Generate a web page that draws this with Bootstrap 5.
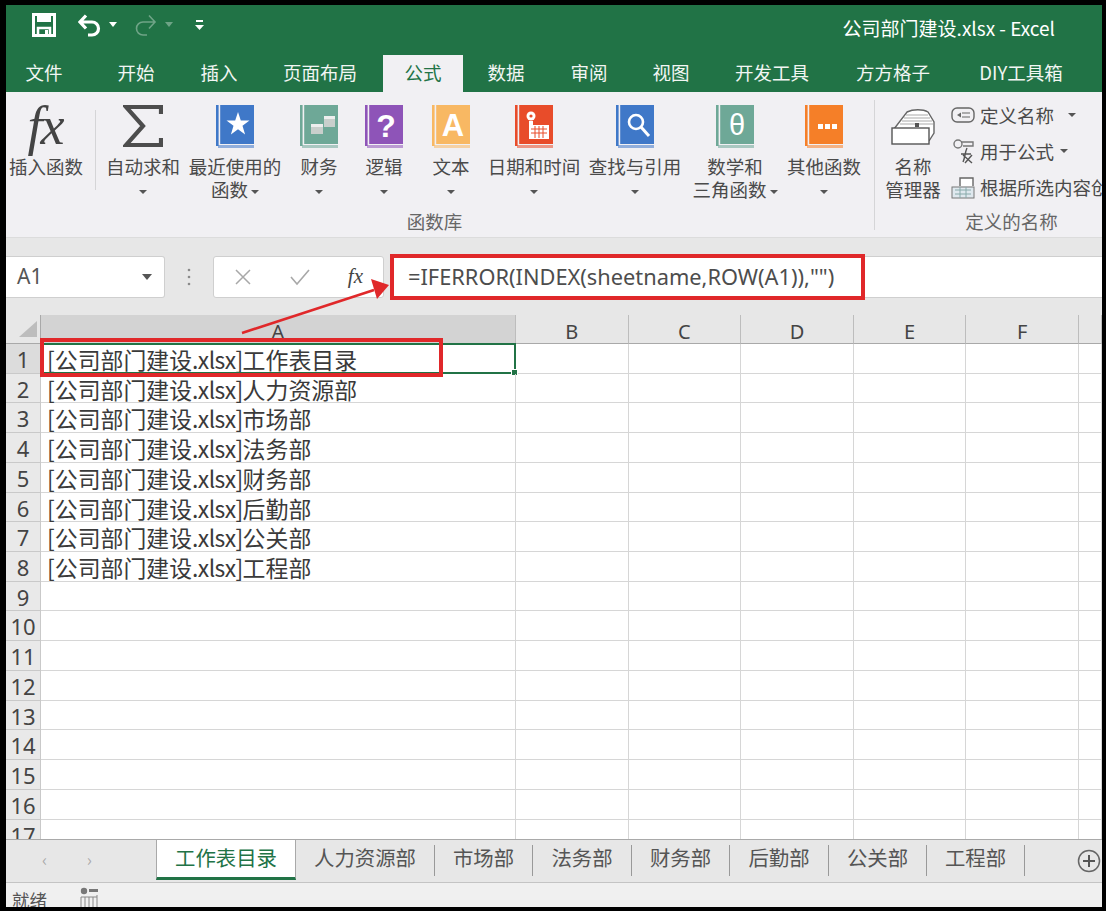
<!DOCTYPE html>
<html lang="zh-CN">
<head>
<meta charset="utf-8">
<title>公司部门建设.xlsx - Excel</title>
<link href="https://cdn.jsdelivr.net/npm/bootstrap@5.3.0/dist/css/bootstrap.min.css" rel="stylesheet">
<style>
html,body{margin:0;background:#fff;overflow:hidden}
body{font-family:"Noto Sans CJK SC","Noto Sans",sans-serif;color:#444}
.xl-frame{width:1106px;height:911px;border:solid #000;border-width:5px 4px 4px 6px;overflow:hidden;position:relative;display:flex;flex-direction:column;background:#fff}
.xl-title{height:50px;background:#217346;color:#fff;flex:none}
.qat{padding:0 0 11px 26px}
.qat-save{width:24px;height:24px;margin-right:22px}
.qat-undo{width:24px;height:24px;margin-right:7px}
.qat-redo{width:24px;height:24px;margin:0 8px 0 16px;opacity:.35}
.qat-caret{width:0;height:0;border:4px solid transparent;border-top:5px solid #fff;border-bottom:0}
.qat-caret.dim{opacity:.35;margin-right:22px}
.qat-more{width:9px;height:12px}
.xl-doc{font-size:19px;padding:0 47px 5px 0;line-height:45px}
.xl-tabs{height:37px;background:#217346;flex:none}
.xl-tabs .nav-link{height:37px;padding:0;line-height:34px;font-size:18.5px;color:#f2f6f3;text-align:center;white-space:nowrap}
.xl-tabs .nav-link.active{background:#f1f0f3;color:#217346}
.t1{width:76px;margin-right:9px}.t2{width:90px}.t3{width:76px}.t4{width:126px}.t5{width:80px}.t6{width:86px}.t7{width:80px}.t8{width:84px}.t9{width:118px}.t10{width:124px}.t11{width:132px}
.xl-ribbon{height:146px;background:#f1f0f3;border-bottom:1px solid #dcdcdc;flex:none;overflow:hidden}
.rb-group{width:858px;height:145px}
.rb-group2{width:227px;height:145px}
.rb-item{padding-top:13px;font-size:18.5px;line-height:23px;color:#4a4a4a;white-space:nowrap;text-align:center}
.rb-icon{height:43px;margin-bottom:7px;display:flex;align-items:center;justify-content:center}
.rb-icon svg{display:block}
.w1{width:80px}.w2{width:76px}.w3{width:108px}.w4{width:60px}.w5{width:70px}.w6{width:64px}.w7{width:102px}.w8{width:100px}.w9{width:78px}
.fx-big{font-family:"Liberation Serif",serif;font-style:italic;font-size:54px;line-height:43px;color:#444;letter-spacing:-2px;padding-right:2px}
.rb-caret{display:inline-block;width:0;height:0;border:4px solid transparent;border-top:4px solid #555;border-bottom:0;vertical-align:middle;margin-left:3px}
.rb-caret.solo{margin-left:0}
.rb-sep{width:1px;background:#d5d5d7;flex:none}
.sep1{height:80px;margin:18px 9px 0}
.sep2{height:130px;margin:8px 0 0 11px}
.rb-label{font-size:18.5px;line-height:23px;color:#666;text-align:center;margin-top:auto;padding-bottom:4px}
.rb-group2 .rb-label{padding-left:46px}
.rb-names{padding-top:5px;font-size:18.5px;line-height:36px;color:#4a4a4a;white-space:nowrap;overflow:hidden;width:151px}
.rb-names svg{flex:none;margin-right:5px}
.rb-names .rb-caret{margin-left:14px}
.rb-names .rb-caret.near{margin-left:6px}
.name-mgr{width:76px}
.xl-fbar{height:77px;background:#e7e7e7;flex:none;padding-top:18px}
.name-box{width:159px;height:42px;background:#fff;border:1px solid #cfcfcf;border-left:0;border-radius:0 3px 3px 0;padding:0 12px 0 11px;font-family:"Noto Sans",sans-serif;font-size:21px;color:#555}
.name-box i{width:0;height:0;border:5px solid transparent;border-top:6px solid #555;border-bottom:0}
.fb-dots{width:48px;height:42px}
.fb-btns{width:171px;height:42px;background:#fff;border:1px solid #cfcfcf;border-radius:3px;padding:0 20px 0 20px}
.fx-small{font-family:"Liberation Serif",serif;font-style:italic;font-size:21px;color:#444}
.fb-input{margin-left:6px;flex:1;height:42px;background:#fff;border-top:1px solid #cfcfcf;border-bottom:1px solid #cfcfcf;padding-left:18px;font-family:"Noto Sans",sans-serif;font-size:21.8px;line-height:40px;color:#4d4d4d;white-space:nowrap}
.xl-grid{height:524px;overflow:hidden;flex:none;background:#fff}
.xl-line{display:grid;grid-template-columns:35px 475px repeat(5,112.6px) 1fr;grid-template-rows:minmax(0,1fr);height:29.73px}
.xl-line>div{border-right:1px solid #d6d6d6;border-bottom:1px solid #d6d6d6;min-width:0;min-height:0}
.xl-line>.hd-cell{background:#e7e7e7;border-color:#a9a9a9;border-right-color:#bdbdbd;text-align:center;font-family:"Noto Sans",sans-serif;font-size:20px;line-height:33px;color:#444}
.xl-line>.hd-cell.sel{background:#d3d3d3}
.xl-line>.hd-corner{background:#e7e7e7;border-color:#a9a9a9;display:flex;justify-content:end;align-items:end;padding:0 3px 6px 0}
.xl-line>.rn{background:#e9e9e9;border-color:#c9c9c9;text-align:center;font-family:"Noto Sans",sans-serif;font-size:22px;line-height:31px;color:#444}
.xl-line>.rn.sel{background:#dcdcdc}
.xl-line>.xl-a{position:relative;padding-left:6px;font-size:22.9px;line-height:31px;color:#3a3a3a;white-space:nowrap}
.xl-ext{letter-spacing:-.6px}
.xl-head{height:29px}
.sel-cell{position:absolute;left:-1px;top:-1px;right:-1px;bottom:-1px;border:2px solid #217346}
.sel-cell i{position:absolute;right:-4px;bottom:-4px;width:7px;height:7px;background:#217346;border:1px solid #fff}
.xl-sheets{height:44px;background:#e7e7e7;border-top:1px solid #a9a9a9;border-bottom:1px solid #c4c4c4;flex:none;font-size:20.4px;color:#555}
.sh-nav{width:150px;padding:0 64px 4px 36px;color:#aaa;font-size:17px}
.sh-active{width:140px;height:41px;margin-top:-1px;background:#fff;color:#217346;border:1px solid #a9a9a9;border-bottom:3px solid #217346;text-align:center;line-height:34px}
.sh-tab{height:31px;margin-top:5px;border-right:1px solid #999;text-align:center;line-height:25px}
.s1{width:139px}.s2{width:98px}.s3{width:99px}.s4{width:98px}.s5{width:99px}.s6{width:98px}.s7{width:98px}
.sh-plus{margin-left:52px;margin-top:9px}
.xl-status{height:24px;background:#f0f0f0;flex:none;padding-left:6px;font-size:17.5px;line-height:34px;color:#555;overflow:hidden}
.xl-status svg{margin-left:33px;margin-top:4px}
.mk-box{position:absolute;border:4px solid #e0282a;pointer-events:none}
.mk-formula{left:384px;top:249px;width:475px;height:46px}
.mk-cell{left:34px;top:333px;width:403px;height:39px}
.mk-arrow{position:absolute;left:-6px;top:-5px;pointer-events:none}
</style>
</head>
<body>
<svg width="0" height="0" class="position-absolute">
<symbol id="book" viewBox="0 0 38 43">
<rect x="0" y="0" width="2.6" height="41" fill="currentColor"/>
<rect x="4.2" y="0" width="33.8" height="39" fill="currentColor"/>
<rect x="2" y="40" width="36" height="3" fill="currentColor" opacity=".55"/>
</symbol>
</svg>
<div class="xl-frame">
  <div class="xl-title d-flex align-items-center justify-content-between">
    <div class="qat d-flex align-items-center">
      <svg class="qat-save" viewBox="0 0 24 24"><path d="M1.5 1.5H22.5V22.5H1.5Z" fill="none" stroke="#fff" stroke-width="3"/><rect x="5" y="2" width="14" height="7" fill="#fff"/><path d="M6 22V15H18V22" fill="none" stroke="#fff" stroke-width="2.5"/><rect x="13" y="17" width="3" height="5" fill="#fff"/></svg>
      <svg class="qat-undo" viewBox="0 0 24 24"><path d="M2 9H14a6.5 6.5 0 0 1 0 13H10M8 2.5L2 9L8 15.5" fill="none" stroke="#fff" stroke-width="3.2"/></svg>
      <span class="qat-caret"></span>
      <svg class="qat-redo" viewBox="0 0 24 24"><path d="M22 9H10a6.5 6.5 0 0 0 0 13H14M16 2.5L22 9L16 15.5" fill="none" stroke="#fff" stroke-width="1.6"/></svg>
      <span class="qat-caret dim"></span>
      <svg class="qat-more" viewBox="0 0 9 12"><rect x="1" y="1" width="7" height="2" fill="#fff"/><path d="M0 6H9L4.5 11Z" fill="#fff"/></svg>
    </div>
    <div class="xl-doc">公司部门建设.xlsx - Excel</div>
  </div>
  <nav class="xl-tabs nav flex-nowrap">
    <a class="nav-link t1">文件</a><a class="nav-link t2">开始</a><a class="nav-link t3">插入</a><a class="nav-link t4">页面布局</a><a class="nav-link active t5">公式</a><a class="nav-link t6">数据</a><a class="nav-link t7">审阅</a><a class="nav-link t8">视图</a><a class="nav-link t9">开发工具</a><a class="nav-link t10">方方格子</a><a class="nav-link t11">DIY工具箱</a>
  </nav>
  <div class="xl-ribbon d-flex">
    <div class="rb-group d-flex flex-column">
      <div class="d-flex">
        <div class="rb-item w1"><div class="rb-icon"><span class="fx-big">fx</span></div>插入函数</div>
        <div class="rb-sep sep1"></div>
        <div class="rb-item w2"><div class="rb-icon"><svg width="40" height="43" viewBox="0 0 40 43"><path d="M38 9V2H3L20 21L3 40H38V33" fill="none" stroke="#4d4d4d" stroke-width="4.2"/></svg></div>自动求和<br><span class="rb-caret solo"></span></div>
        <div class="rb-item w3"><div class="rb-icon"><svg width="38" height="43" style="color:#3f78c8"><use href="#book"/><polygon points="22,7 24.8,15.5 33.5,15.5 26.5,20.8 29.1,29.5 22,24.3 14.9,29.5 17.5,20.8 10.5,15.5 19.2,15.5" fill="#fff"/></svg></div>最近使用的<br>函数<span class="rb-caret"></span></div>
        <div class="rb-item w4"><div class="rb-icon"><svg width="38" height="43" style="color:#6ea897"><use href="#book"/><rect x="11" y="19" width="12" height="10" fill="#c9cfcc"/><rect x="11" y="19" width="12" height="3" fill="#eee"/><rect x="24" y="11" width="11" height="11" fill="#c9cfcc"/><rect x="24" y="11" width="11" height="3" fill="#eee"/></svg></div>财务<br><span class="rb-caret solo"></span></div>
        <div class="rb-item w5"><div class="rb-icon"><svg width="38" height="43" style="color:#8e54b8"><use href="#book"/><text x="21" y="32" text-anchor="middle" font-family="Liberation Sans" font-weight="700" font-size="32" fill="#fff">?</text></svg></div>逻辑<br><span class="rb-caret solo"></span></div>
        <div class="rb-item w6"><div class="rb-icon"><svg width="38" height="43" style="color:#f8b863"><use href="#book"/><text x="21" y="31" text-anchor="middle" font-family="Liberation Sans" font-weight="700" font-size="31" fill="#fff">A</text></svg></div>文本<br><span class="rb-caret solo"></span></div>
        <div class="rb-item w7"><div class="rb-icon"><svg width="38" height="43" style="color:#e84c2a"><use href="#book"/><circle cx="16" cy="11" r="4.5" fill="#fff"/><circle cx="16" cy="11" r="1.6" fill="#e84c2a"/><path d="M14 16H18V20H34V34H14Z" fill="#fff"/><path d="M16 24H32M16 28H32M20 21V33M24 21V33M28 21V33" stroke="#e84c2a" stroke-width="1"/></svg></div>日期和时间<br><span class="rb-caret solo"></span></div>
        <div class="rb-item w8"><div class="rb-icon"><svg width="38" height="43" style="color:#3f78c8"><use href="#book"/><circle cx="20" cy="17" r="7" fill="none" stroke="#fff" stroke-width="2.6"/><path d="M25 22L33 31" stroke="#fff" stroke-width="3"/></svg></div>查找与引用<br><span class="rb-caret solo"></span></div>
        <div class="rb-item w8"><div class="rb-icon"><svg width="38" height="43" style="color:#6ea897"><use href="#book"/><text x="21" y="30" text-anchor="middle" font-family="Liberation Sans" font-size="29" fill="#fff">θ</text></svg></div>数学和<br>三角函数<span class="rb-caret"></span></div>
        <div class="rb-item w9"><div class="rb-icon"><svg width="38" height="43" style="color:#f57f28"><use href="#book"/><rect x="13" y="19" width="5" height="5" fill="#fff"/><rect x="20" y="19" width="5" height="5" fill="#fff"/><rect x="27" y="19" width="5" height="5" fill="#fff"/></svg></div>其他函数<br><span class="rb-caret solo"></span></div>
      </div>
      <div class="rb-label">函数库</div>
    </div>
    <div class="rb-sep sep2"></div>
    <div class="rb-group2 d-flex flex-column">
      <div class="d-flex">
        <div class="rb-item name-mgr"><div class="rb-icon"><svg width="44" height="43" viewBox="0 0 44 43"><path d="M3 24L16 7C22 4 32 4 37 7L43 17V28L38 36" fill="#fff" stroke="#666" stroke-width="1.4"/><path d="M15 10H37M13 13H39M11 16H41M9 19H42" stroke="#aaa" stroke-width="1.2"/><rect x="1" y="23" width="37" height="16" fill="#fff" stroke="#555" stroke-width="1.4"/><rect x="24" y="18" width="4" height="4" fill="#555"/></svg></div>名称<br>管理器</div>
        <div class="rb-names d-flex flex-column">
          <div class="d-flex align-items-center"><svg width="24" height="18" viewBox="0 0 24 18"><rect x="1" y="2" width="22" height="14" rx="5" fill="none" stroke="#666" stroke-width="1.4"/><path d="M6 9L10 6.5V11.5Z" fill="#666"/><path d="M11 7H19M11 11H19" stroke="#666" stroke-width="1.2"/></svg>定义名称<span class="rb-caret"></span></div>
          <div class="d-flex align-items-center"><svg width="24" height="26" viewBox="0 0 24 26"><circle cx="7" cy="6" r="4" fill="none" stroke="#777" stroke-width="1.4"/><path d="M10 4H22V8H12" fill="none" stroke="#777" stroke-width="1.4"/><path d="M16 10C14 14 14 20 12 24M10 16H20M12 17L21 25M21 17L14 25" fill="none" stroke="#555" stroke-width="1.4"/></svg>用于公式<span class="rb-caret near"></span></div>
          <div class="d-flex align-items-center"><svg width="24" height="24" viewBox="0 0 24 24"><rect x="1" y="12" width="22" height="11" fill="#dfe8ee" stroke="#777"/><path d="M4 15H20M4 19H20M9 12V23M15 12V23" stroke="#8aa" stroke-width="1"/><path d="M9 11V3H22V11" fill="#fff" stroke="#666" stroke-width="1.4"/></svg>根据所选内容创建</div>
        </div>
      </div>
      <div class="rb-label">定义的名称</div>
    </div>
  </div>
  <div class="xl-fbar d-flex">
    <div class="name-box d-flex align-items-center justify-content-between">A1<i></i></div>
    <div class="fb-dots d-flex align-items-center justify-content-center"><svg width="4" height="20" viewBox="0 0 4 20"><circle cx="2" cy="3" r="1.3" fill="#8a8a8a"/><circle cx="2" cy="10" r="1.3" fill="#8a8a8a"/><circle cx="2" cy="17" r="1.3" fill="#8a8a8a"/></svg></div>
    <div class="fb-btns d-flex align-items-center justify-content-between">
      <svg width="18" height="18" viewBox="0 0 18 18"><path d="M2 2L16 16M16 2L2 16" stroke="#a8a8a8" stroke-width="1.5"/></svg>
      <svg width="22" height="18" viewBox="0 0 22 18"><path d="M2 9L8 16L20 2" fill="none" stroke="#a8a8a8" stroke-width="1.6"/></svg>
      <span class="fx-small">fx</span>
    </div>
    <div class="fb-input">=IFERROR(INDEX(sheetname,ROW(A1)),"")</div>
  </div>
  <div class="xl-grid">
    <div class="xl-line xl-head">
      <div class="hd-corner"><svg width="18" height="16" viewBox="0 0 18 16"><path d="M18 0V16H0Z" fill="#bdbdbd"/></svg></div>
      <div class="hd-cell sel">A</div><div class="hd-cell">B</div><div class="hd-cell">C</div><div class="hd-cell">D</div><div class="hd-cell">E</div><div class="hd-cell">F</div><div class="hd-cell"></div>
    </div>
    <div class="xl-line"><div class="rn sel">1</div><div class="xl-a">[公司部门建设<span class="xl-ext">.xlsx]</span>工作表目录<span class="sel-cell"><i></i></span></div><div></div><div></div><div></div><div></div><div></div><div></div></div>
    <div class="xl-line"><div class="rn">2</div><div class="xl-a">[公司部门建设<span class="xl-ext">.xlsx]</span>人力资源部</div><div></div><div></div><div></div><div></div><div></div><div></div></div>
    <div class="xl-line"><div class="rn">3</div><div class="xl-a">[公司部门建设<span class="xl-ext">.xlsx]</span>市场部</div><div></div><div></div><div></div><div></div><div></div><div></div></div>
    <div class="xl-line"><div class="rn">4</div><div class="xl-a">[公司部门建设<span class="xl-ext">.xlsx]</span>法务部</div><div></div><div></div><div></div><div></div><div></div><div></div></div>
    <div class="xl-line"><div class="rn">5</div><div class="xl-a">[公司部门建设<span class="xl-ext">.xlsx]</span>财务部</div><div></div><div></div><div></div><div></div><div></div><div></div></div>
    <div class="xl-line"><div class="rn">6</div><div class="xl-a">[公司部门建设<span class="xl-ext">.xlsx]</span>后勤部</div><div></div><div></div><div></div><div></div><div></div><div></div></div>
    <div class="xl-line"><div class="rn">7</div><div class="xl-a">[公司部门建设<span class="xl-ext">.xlsx]</span>公关部</div><div></div><div></div><div></div><div></div><div></div><div></div></div>
    <div class="xl-line"><div class="rn">8</div><div class="xl-a">[公司部门建设<span class="xl-ext">.xlsx]</span>工程部</div><div></div><div></div><div></div><div></div><div></div><div></div></div>
    <div class="xl-line"><div class="rn">9</div><div class="xl-a"></div><div></div><div></div><div></div><div></div><div></div><div></div></div>
    <div class="xl-line"><div class="rn">10</div><div class="xl-a"></div><div></div><div></div><div></div><div></div><div></div><div></div></div>
    <div class="xl-line"><div class="rn">11</div><div class="xl-a"></div><div></div><div></div><div></div><div></div><div></div><div></div></div>
    <div class="xl-line"><div class="rn">12</div><div class="xl-a"></div><div></div><div></div><div></div><div></div><div></div><div></div></div>
    <div class="xl-line"><div class="rn">13</div><div class="xl-a"></div><div></div><div></div><div></div><div></div><div></div><div></div></div>
    <div class="xl-line"><div class="rn">14</div><div class="xl-a"></div><div></div><div></div><div></div><div></div><div></div><div></div></div>
    <div class="xl-line"><div class="rn">15</div><div class="xl-a"></div><div></div><div></div><div></div><div></div><div></div><div></div></div>
    <div class="xl-line"><div class="rn">16</div><div class="xl-a"></div><div></div><div></div><div></div><div></div><div></div><div></div></div>
    <div class="xl-line"><div class="rn">17</div><div class="xl-a"></div><div></div><div></div><div></div><div></div><div></div><div></div></div>
  </div>
  <div class="xl-sheets d-flex">
    <div class="sh-nav d-flex align-items-center justify-content-between"><span>‹</span><span>›</span></div>
    <div class="sh-active">工作表目录</div>
    <div class="sh-tab s1">人力资源部</div><div class="sh-tab s2">市场部</div><div class="sh-tab s3">法务部</div><div class="sh-tab s4">财务部</div><div class="sh-tab s5">后勤部</div><div class="sh-tab s6">公关部</div><div class="sh-tab s7">工程部</div>
    <svg class="sh-plus" width="24" height="24" viewBox="0 0 24 24"><circle cx="12" cy="12" r="10.5" fill="none" stroke="#666" stroke-width="1.5"/><path d="M12 6V18M6 12H18" stroke="#555" stroke-width="2"/></svg>
  </div>
  <div class="xl-status d-flex">
    <span>就绪</span>
    <svg width="18" height="20" viewBox="0 0 18 20"><circle cx="4" cy="4" r="3.2" fill="#777"/><rect x="9" y="2" width="9" height="3" fill="#777"/><path d="M1 20V10M5 20V10M9 20V10M13 20V10M17 20V8M1 10H17" stroke="#888" stroke-width="1"/></svg>
  </div>
  <div class="mk-box mk-formula"></div>
  <div class="mk-box mk-cell"></div>
  <svg class="mk-arrow" width="1108" height="914" viewBox="0 0 1108 914"><path d="M242 333L374 290" stroke="#e0282a" stroke-width="2.6"/><path d="M389 285L371 279L377 299Z" fill="#e0282a"/></svg>
</div>
<script src="https://cdn.jsdelivr.net/npm/bootstrap@5.3.0/dist/js/bootstrap.bundle.min.js"></script>
</body>
</html>
